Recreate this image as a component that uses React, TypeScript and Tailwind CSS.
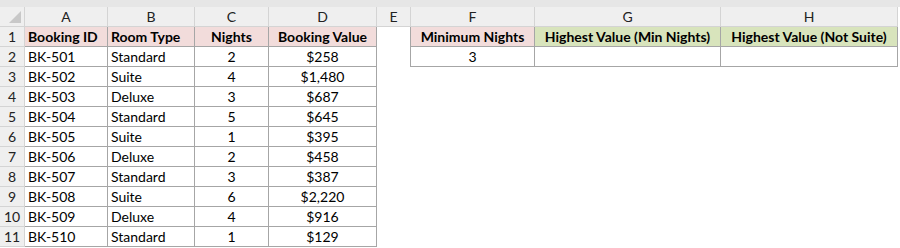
import React from "react";

type Row = [string, string, number, string];

const bookings: Row[] = [
  ["BK-501", "Standard", 2, "$258"],
  ["BK-502", "Suite", 4, "$1,480"],
  ["BK-503", "Deluxe", 3, "$687"],
  ["BK-504", "Standard", 5, "$645"],
  ["BK-505", "Suite", 1, "$395"],
  ["BK-506", "Deluxe", 2, "$458"],
  ["BK-507", "Standard", 3, "$387"],
  ["BK-508", "Suite", 6, "$2,220"],
  ["BK-509", "Deluxe", 4, "$916"],
  ["BK-510", "Standard", 1, "$129"],
];

const letters = ["A", "B", "C", "D", "E", "F", "G", "H"];

const GRID = "grid grid-cols-[25px_83px_87px_74px_108px_34px_124px_186px_177px]";

// plain data cell with the dark table border
function Cell({
  children,
  className = "",
}: {
  children?: React.ReactNode;
  className?: string;
}) {
  return (
    <div
      className={`h-5 border-r border-b border-[#a6a6a6] px-[3px] leading-[19px] whitespace-nowrap overflow-hidden ${className}`}>
      {children}
    </div>
  );
}

function RowHead({ n }: { n: number }) {
  return (
    <div className="h-5 bg-[#efefef] border-r border-b border-[#d4d4d4] text-center leading-[19px] text-[#222]">
      {n}
    </div>
  );
}

export default function App() {
  return (
    <div
      className="w-[900px] h-[248px] bg-white text-[14px] text-black overflow-hidden"
      style={{ fontFamily: "Lato, 'Open Sans', sans-serif" }}>
      <div className="h-[7px] bg-[#e6e6e6]" />

      {/* Column letters */}
      <div className={GRID}>
        <div className="h-5 bg-[#efefef] border-r border-b border-[#d4d4d4] relative">
          <div className="absolute right-[3px] bottom-[3px] w-0 h-0 border-l-[12px] border-l-transparent border-b-[12px] border-b-[#c8c8c8]" />
        </div>
        {letters.map((l) => (
          <div
            key={l}
            className="h-5 bg-[#efefef] border-r border-b border-[#d4d4d4] text-center leading-[19px] text-[#222]">
            {l}
          </div>
        ))}
      </div>

      {/* Row 1: headers */}
      <div className={GRID}>
        <RowHead n={1} />
        <Cell className="bg-[#f2dcdb] font-bold">Booking ID</Cell>
        <Cell className="bg-[#f2dcdb] font-bold">Room Type</Cell>
        <Cell className="bg-[#f2dcdb] font-bold text-center">Nights</Cell>
        <Cell className="bg-[#f2dcdb] font-bold text-center">Booking Value</Cell>
        <div className="h-5 border-r border-[#a6a6a6]" />
        <Cell className="bg-[#f2dcdb] font-bold text-center">Minimum Nights</Cell>
        <Cell className="bg-[#d8e4bc] font-bold text-center">Highest Value (Min Nights)</Cell>
        <Cell className="bg-[#d8e4bc] font-bold text-center">Highest Value (Not Suite)</Cell>
      </div>

      {bookings.map(([id, type, nights, value], i) => (
        <div key={id} className={GRID}>
          <RowHead n={i + 2} />
          <Cell>{id}</Cell>
          <Cell>{type}</Cell>
          <Cell className="text-center">{nights}</Cell>
          <Cell className="text-center">{value}</Cell>
          {i === 0 ? (
            <>
              <div className="h-5 border-r border-[#a6a6a6]" />
              <Cell className="text-center">3</Cell>
              <Cell />
              <Cell />
            </>
          ) : (
            <div className="col-span-4 h-5" />
          )}
        </div>
      ))}
    </div>
  );
}
